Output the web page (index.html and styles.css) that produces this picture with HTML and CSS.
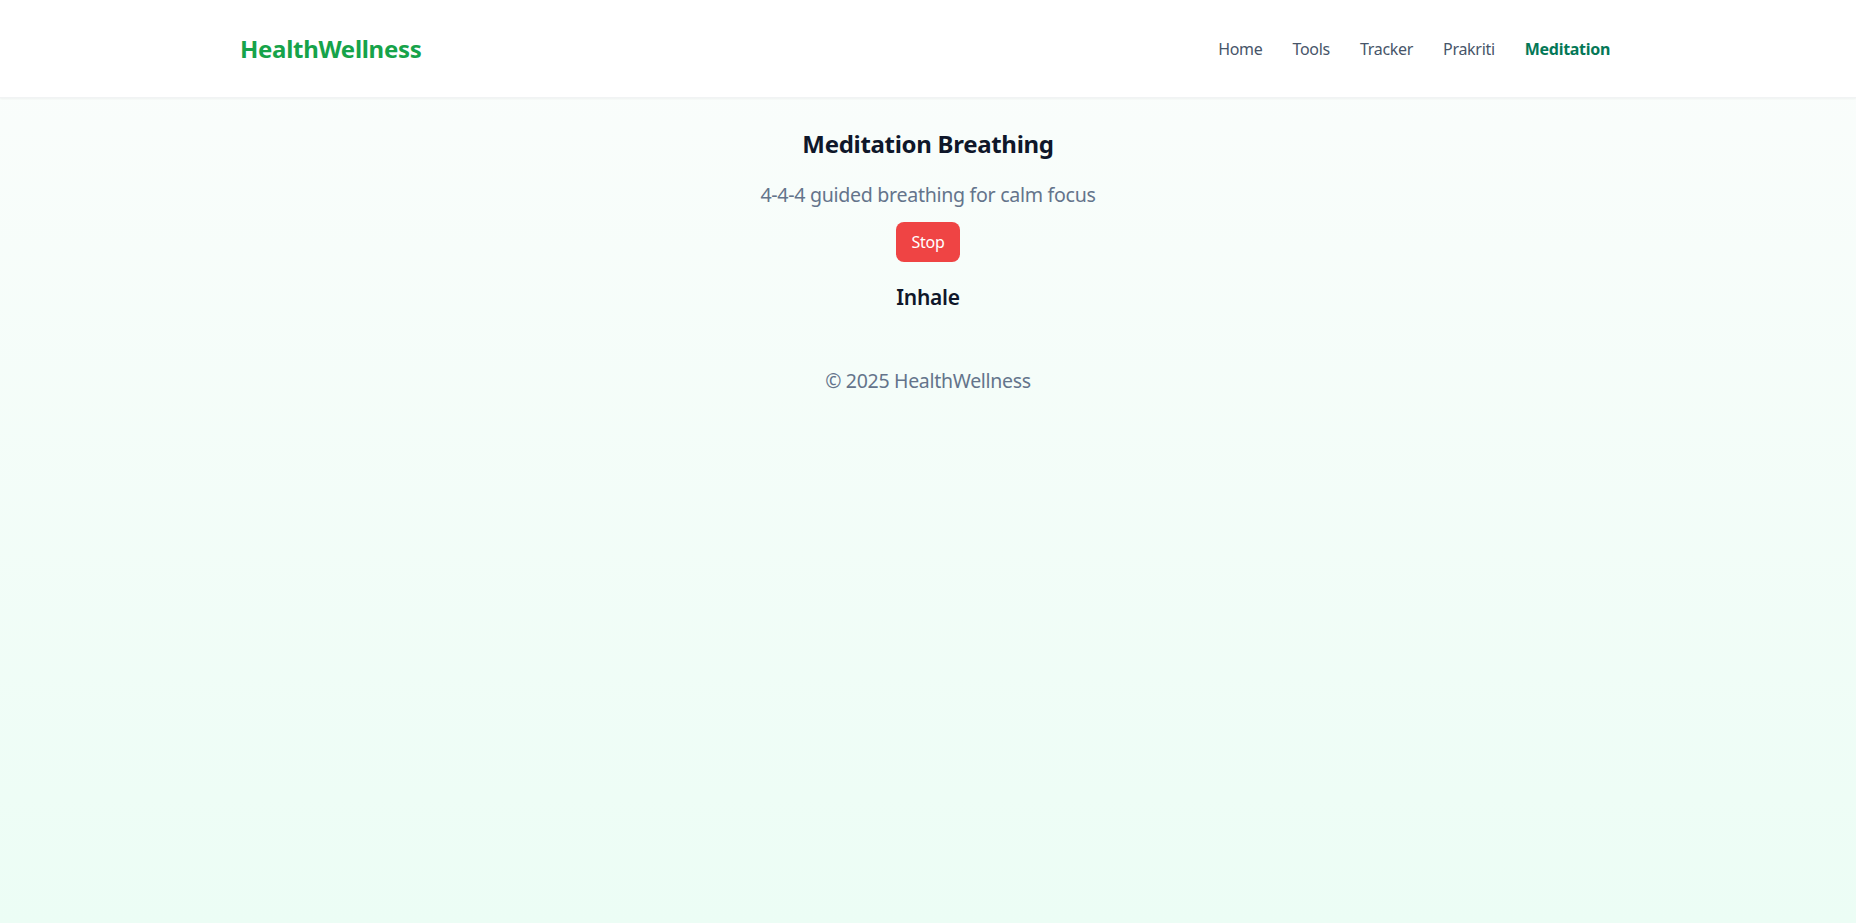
FILE: index.html
```html
<!DOCTYPE html>
<html lang="en">
<head>
<meta charset="utf-8">
<title>Meditation Breathing - HealthWellness</title>
<link rel="stylesheet" href="styles.css">
</head>
<body>
<header class="site-header">
  <div class="header-inner">
    <a class="logo" href="#">HealthWellness</a>
    <nav class="nav">
      <a class="nav-link" href="#">Home</a>
      <a class="nav-link" href="#">Tools</a>
      <a class="nav-link" href="#">Tracker</a>
      <a class="nav-link" href="#">Prakriti</a>
      <a class="nav-link active" href="#">Meditation</a>
    </nav>
  </div>
</header>
<main class="main">
  <h1 class="title">Meditation Breathing</h1>
  <p class="subtitle">4-4-4 guided breathing for calm focus</p>
  <button class="stop-btn" type="button">Stop</button>
  <div class="phase">Inhale</div>
</main>
<footer class="footer">© 2025 HealthWellness</footer>
</body>
</html>
```
FILE: styles.css
```css
* { box-sizing: border-box; }
html, body { height: 100%; }
body {
  margin: 0;
  min-height: 100%;
  font-family: "Noto Sans", "Open Sans", "DejaVu Sans", sans-serif;
  background: linear-gradient(180deg, #fbfdfc 0%, #ecfdf5 100%);
  color: #0f172a;
}
.site-header {
  background: #ffffff;
  box-shadow: 0 1px 2px rgba(0, 0, 0, 0.05);
  border-bottom: 1px solid #f1f3f4;
}
.header-inner {
  max-width: 1376px;
  margin: 0 auto;
  height: 97px;
  padding-right: 6px;
  display: flex;
  align-items: center;
  justify-content: space-between;
}
.logo {
  color: #16a34a;
  font-weight: 700;
  font-size: 24px;
  text-decoration: none;
  letter-spacing: -0.3px;
}
.nav {
  display: flex;
  gap: 30px;
  align-items: center;
}
.nav-link {
  color: #475569;
  text-decoration: none;
  font-size: 16px;
  letter-spacing: -0.3px;
}
.nav-link.active {
  color: #047857;
  font-weight: 700;
}
.main {
  display: flex;
  flex-direction: column;
  align-items: center;
  padding-top: 28px;
}
.title {
  margin: 0;
  font-size: 24px;
  font-weight: 700;
  line-height: 36px;
  letter-spacing: -0.3px;
}
.subtitle {
  margin: 19px 0 0;
  font-size: 19.6px;
  color: #64748b;
  line-height: 28px;
  letter-spacing: -0.3px;
}
.stop-btn {
  margin-top: 13px;
  width: 64px;
  height: 40px;
  border: none;
  border-radius: 8px;
  background: #ef4444;
  color: #ffffff;
  font-family: inherit;
  font-size: 16px;
  letter-spacing: -0.3px;
  cursor: pointer;
}
.phase {
  margin-top: 19px;
  font-size: 21px;
  font-weight: 600;
  line-height: 32px;
  letter-spacing: -0.3px;
}
.footer {
  text-align: center;
  color: #64748b;
  font-size: 19.5px;
  padding-top: 54px;
  letter-spacing: -0.3px;
}
```
